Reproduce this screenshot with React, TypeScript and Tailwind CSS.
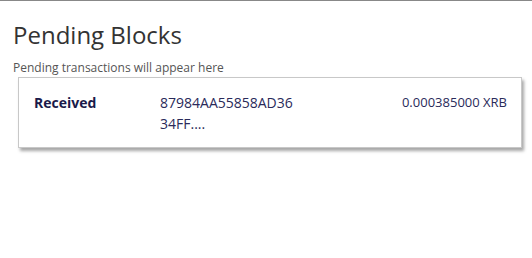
export default function App() {
  return (
    <div className="min-h-[258px] w-[532px] bg-white border-t border-[#888888]" style={{ fontFamily: '"Open Sans", sans-serif' }}>
      <div className="px-[13px] pt-[18px]">
        <h1 className="text-[24px] leading-[32px] text-[#333333] font-normal">Pending Blocks</h1>
        <p className="mt-[9px] text-[12px] leading-[16px] text-[#555555]">Pending transactions will appear here</p>
      </div>
      <div className="ml-[18px] mr-[10px] mt-[1px] h-[71px] border border-[#c8c8c8] bg-white shadow-[2px_3px_3px_rgba(0,0,0,0.35)] flex items-start pt-[14px] pl-[15px] pr-[14px]">
        <div className="w-[126px] text-[14px] leading-[21px] font-bold text-[#1a1a4a]">Received</div>
        <div className="w-[140px] break-all text-[14px] leading-[21px] text-[#2a2a5a]">87984AA55858AD3634FF....</div>
        <div className="flex-1 text-right text-[13px] leading-[21px] text-[#2a2a5a]">0.000385000 XRB</div>
      </div>
    </div>
  );
}
